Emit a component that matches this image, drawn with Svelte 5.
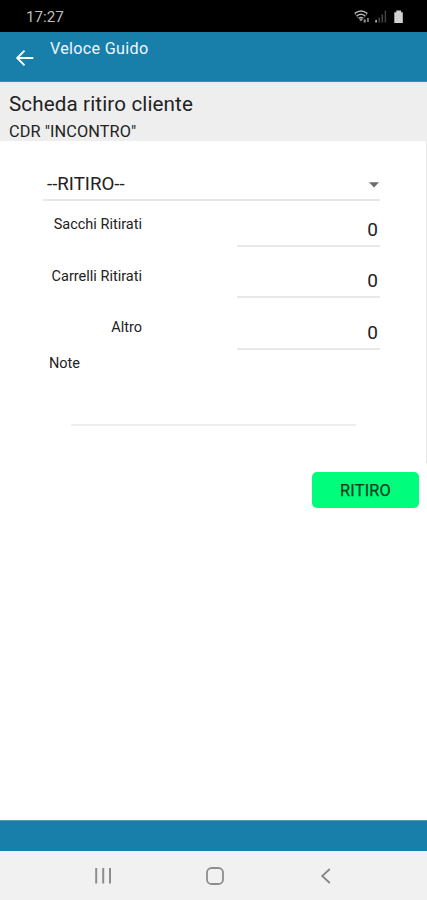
<script>
  const fields = [
    { label: 'Sacchi Ritirati', value: 0 },
    { label: 'Carrelli Ritirati', value: 0 },
    { label: 'Altro', value: 0 }
  ];
</script>

<div class="screen">
  <div class="status">
    <span class="time">17:27</span>
    <svg class="indicators" width="52" height="18" viewBox="0 0 52 18">
      <g fill="none" stroke="#b4b4b4" stroke-width="1.5">
        <path d="M.8 5.4Q7 .5 13.2 5.4" />
        <path d="M2.9 7.8Q7 4.8 11 7.8" />
        <path d="M5 10.1Q7 8.8 8.8 10.1" />
      </g>
      <path d="M.5 5.3 7 13.2 13.5 5.3" fill="none" stroke="#777" stroke-width=".8" />
      <path d="M5.7 10.8h2.6L7 13z" fill="#bbb" />
      <path d="M9.7 11.5h2v3h-2zM13.2 10h1.5v4h-1.5z" fill="#999" />
      <path d="M21.3 12h1.6v2.5h-1.6z" fill="#bbb" />
      <path d="M24.5 9.5h1.6v5h-1.6zM27.5 6.5h1.6v8h-1.6zM30.7 2.5h1.4v12h-1.4z" fill="#444" />
      <path d="M40.3 4.2h2V2.5h4.8v1.7h1.7V15h-8.5z" fill="#d2d2d2" />
    </svg>
  </div>

  <header>
    <svg class="back" width="20" height="20" viewBox="0 0 20 20">
      <path d="M18.3 10H2.5M9.5 2.6 2.2 10l7.3 7.4" fill="none" stroke="#fff" stroke-width="1.9" />
    </svg>
    <span class="app-name">Veloce Guido</span>
  </header>

  <section class="heading">
    <h1>Scheda ritiro cliente</h1>
    <p>CDR "INCONTRO"</p>
  </section>

  <main>
    <div class="select">
      <span>--RITIRO--</span>
      <svg width="10" height="6" viewBox="0 0 10 6"><path d="M0 .3h10L5 5.5z" fill="#6c6c6c" /></svg>
    </div>
    {#each fields as field}
      <div class="row">
        <span class="label">{field.label}</span>
        <span class="value">{field.value}</span>
      </div>
    {/each}
    <div class="note-label">Note</div>
    <div class="note"></div>
  </main>

  <div class="actions"><button>RITIRO</button></div>

  <footer></footer>
  <nav>
    <svg width="18" height="18" viewBox="0 0 18 18"><path d="M2.2 1v15.5M9.2 1v15.5M16 1v15.5" stroke="#8d8d8d" stroke-width="2" /></svg>
    <svg width="18" height="18" viewBox="0 0 18 18"><rect x="1" y="1" width="16" height="16" rx="4.6" fill="none" stroke="#8d8d8d" stroke-width="1.8" /></svg>
    <svg width="18" height="18" viewBox="0 0 18 18"><path d="M12.8 2 5.2 9l7.6 7" fill="none" stroke="#858585" stroke-width="1.8" /></svg>
  </nav>
</div>

<style>
  .screen {
    display: flex;
    flex-direction: column;
    width: 427px;
    height: 900px;
    background: #fff;
    color: #222;
    font-family: Roboto, sans-serif;
    overflow: hidden;
  }
  .status {
    display: flex;
    justify-content: space-between;
    align-items: center;
    box-sizing: border-box;
    height: 32px;
    padding: 2px 21px 0 26px;
    background: #000;
  }
  .time { color: #bcbcbc; font-size: 15.2px; }
  header {
    display: flex;
    box-sizing: border-box;
    height: 50px;
    padding-left: 15px;
    background: #187eaa;
    border-bottom: 1px solid #3b8eaf;
  }
  .back { margin-top: 16px; }
  .app-name {
    margin: 7px 0 0 15px;
    color: #eef7fa;
    font-size: 16.2px;
    letter-spacing: .28px;
    line-height: 20px;
  }
  .heading {
    box-sizing: border-box;
    height: 59px;
    padding: 9px 9px 0;
    background: #eee;
  }
  h1 { margin: 0; font-size: 20.6px; font-weight: 400; line-height: 27px; letter-spacing: .13px; white-space: nowrap; }
  p { margin: 4px 0 0; font-size: 16.3px; line-height: 20px; letter-spacing: .1px; }
  main {
    box-sizing: border-box;
    height: 322px;
    padding: 27px 46px 0 43px;
    border-right: 1px solid #e6e6e6;
  }
  .select {
    display: flex;
    justify-content: space-between;
    align-items: center;
    box-sizing: border-box;
    height: 33px;
    padding: 0 1px 0 4px;
    border-bottom: 2px solid #e7e7e7;
    font-size: 18.7px;
  }
  .select svg { margin-top: 3px; }
  .row { display: flex; justify-content: space-between; height: 52px; }
  .row:nth-of-type(2) { height: 51px; }
  .label { width: 99px; padding-top: 14px; font-size: 14.5px; line-height: 20px; text-align: right; white-space: nowrap; }
  .row:nth-of-type(3) .label { padding-top: 15px; }
  .value {
    box-sizing: border-box;
    width: 143px;
    height: 46px;
    padding: 14px 2px 0 0;
    border-bottom: 2px solid #e8e8e8;
    font-size: 19px;
    line-height: 30px;
    text-align: right;
  }
  .note-label { margin-top: -2px; padding-left: 6px; font-size: 14.5px; line-height: 20px; }
  .note { width: 285px; height: 50px; margin-left: 28px; border-bottom: 2px solid #eee; }
  .actions { display: flex; justify-content: flex-end; padding: 9px 8px 0 0; }
  button {
    width: 107px;
    height: 36px;
    padding: 0;
    border: 0;
    border-radius: 5px;
    background: #00fe7d;
    color: #0b3c20;
    font: 400 16.3px Roboto, sans-serif;
    letter-spacing: .25px;
    -webkit-text-stroke: .25px #0b3c20;
  }
  footer {
    box-sizing: border-box;
    height: 31px;
    margin-top: auto;
    background: #187eaa;
    border-top: 1px solid #5299b5;
  }
  nav {
    display: flex;
    justify-content: space-between;
    align-items: center;
    box-sizing: border-box;
    height: 49px;
    padding: 1px 92px 0 94px;
    background: #f1f1f1;
  }
</style>
